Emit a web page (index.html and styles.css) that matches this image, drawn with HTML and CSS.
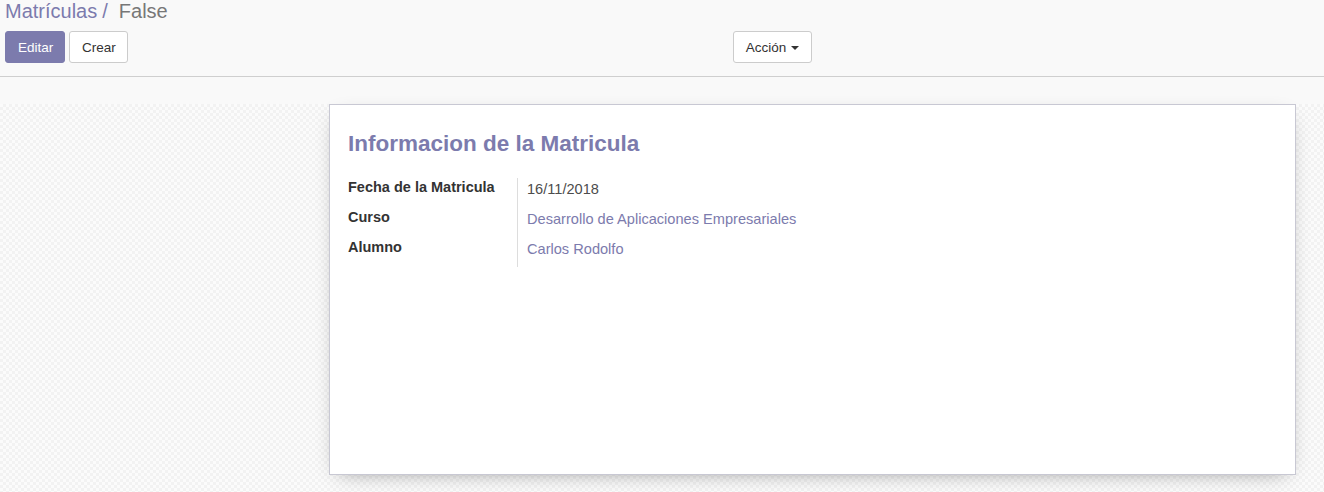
FILE: index.html
```html
<!DOCTYPE html>
<html lang="es">
<head>
<meta charset="utf-8">
<title>Matrículas</title>
<link rel="stylesheet" href="styles.css">
</head>
<body>
<div class="control-panel">
  <div class="breadcrumb"><a class="crumb-link" href="#">Matrículas</a><span class="crumb-sep">/</span><span class="crumb-active">False</span></div>
  <div class="cp-row">
    <div class="cp-buttons">
      <button class="btn btn-primary">Editar</button>
      <button class="btn btn-default">Crear</button>
    </div>
    <div class="cp-sidebar">
      <button class="btn btn-default btn-action">Acción <span class="caret"></span></button>
    </div>
  </div>
</div>
<div class="spacer"></div>
<div class="form-bg">
  <div class="sheet">
    <h1 class="sheet-title">Informacion de la Matricula</h1>
    <div class="fields">
      <div class="labels">
        <div class="label">Fecha de la Matricula</div>
        <div class="label">Curso</div>
        <div class="label">Alumno</div>
      </div>
      <div class="values">
        <div class="value">16/11/2018</div>
        <div class="value"><a class="link" href="#">Desarrollo de Aplicaciones Empresariales</a></div>
        <div class="value"><a class="link" href="#">Carlos Rodolfo</a></div>
      </div>
    </div>
  </div>
</div>
</body>
</html>
```
FILE: styles.css
```css
* { box-sizing: border-box; }
html, body { margin: 0; padding: 0; }
body {
  font-family: "Liberation Sans", Arial, sans-serif;
  font-size: 13px;
  color: #4c4c4c;
  background: #f9f9f9;
  width: 1324px;
  height: 492px;
  overflow: hidden;
}
.control-panel {
  height: 77px;
  background: #f9f9f9;
  border-bottom: 1px solid #cfcfcf;
  padding: 0 5px;
}
.breadcrumb {
  font-size: 20px;
  line-height: 23px;
  height: 26px;
  padding-top: 0;
}
.crumb-link { color: #7c7bad; text-decoration: none; }
.crumb-sep { color: #7c7bad; padding: 0 11px 0 5px; }
.crumb-active { color: #777777; }
.cp-row {
  display: flex;
  margin-top: 5px;
  height: 32px;
}
.cp-buttons { display: flex; gap: 4px; width: 728px; }
.btn {
  font-family: "Liberation Sans", Arial, sans-serif;
  font-size: 13.5px;
  height: 32px;
  padding: 0 12px;
  border-radius: 3px;
  border: 1px solid #cccccc;
  background: #ffffff;
  color: #333333;
  cursor: pointer;
}
.btn-primary {
  background: #7c7bad;
  border-color: #7c7bad;
  color: #ffffff;
  width: 60px;
}
.btn-default { width: 59px; }
.btn-action { width: 79px; padding: 0; }
.caret {
  display: inline-block;
  width: 0; height: 0;
  border-top: 4px solid #333;
  border-left: 4px solid transparent;
  border-right: 4px solid transparent;
  vertical-align: middle;
  margin-left: 1px;
}
.spacer { height: 27px; }
.form-bg {
  height: 388px;
  background-color: #fbfbfb;
  background-image: conic-gradient(#f2f2f2 25%, transparent 0 50%, #f2f2f2 0 75%, transparent 0);
  background-size: 6px 6px;
  padding-left: 329px;
}
.sheet {
  width: 967px;
  height: 371px;
  background: #ffffff;
  border: 1px solid #c8c8d3;
  box-shadow: 0 6px 20px -10px rgba(0,0,0,0.45);
  padding: 24px 18px;
}
.sheet-title {
  margin: 0;
  font-size: 22.5px;
  line-height: 30px;
  font-weight: bold;
  color: #7c7bad;
}
.fields {
  display: flex;
  margin-top: 19px;
}
.labels { width: 169px; }
.label {
  font-weight: bold;
  color: #333333;
  font-size: 14.5px;
  height: 30px;
  line-height: 17px;
  padding-top: 1px;
}
.values {
  border-left: 1px solid #dddddd;
  padding-left: 9px;
  height: 89px;
}
.value {
  height: 30px;
  line-height: 17px;
  padding-top: 3px;
  font-size: 14.6px;
  color: #4c4c4c;
}
.link { color: #7c7bad; text-decoration: none; }
```
